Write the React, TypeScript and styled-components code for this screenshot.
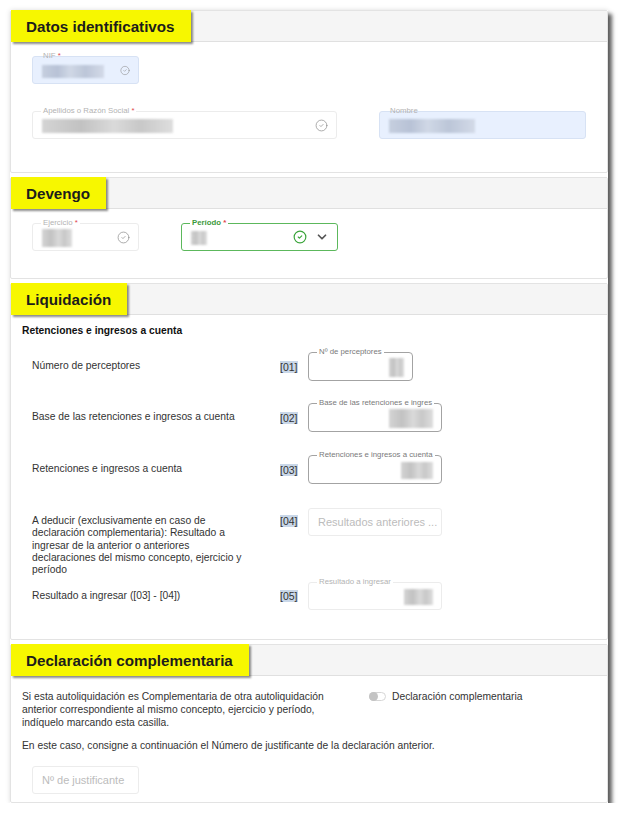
import React from 'react';
import styled, { createGlobalStyle, css } from 'styled-components';
import { CircleCheck, ChevronDown } from 'lucide-react';

const GlobalStyle = createGlobalStyle`
  html, body {
    margin: 0;
    padding: 0;
    background: #ffffff;
  }
  body {
    font-family: "Liberation Sans", Arial, sans-serif;
    color: #333;
  }
`;

const Frame = styled.div`
  margin: 10px 0 0 10px;
  width: 598px;
  background: #fff;
  box-shadow: 0 0 5px rgba(0, 0, 0, 0.12), 4px 4px 4px rgba(0, 0, 0, 0.62);
`;

const Card = styled.section<{ $last?: boolean }>`
  border: 1px solid #e3e3e3;
  border-radius: 2px;
  margin-bottom: ${p => (p.$last ? '0' : '4px')};
`;

const CardHeader = styled.div`
  height: 30px;
  background: #f5f5f5;
  border-bottom: 1px solid #e0e0e0;
  display: flex;
`;

const Tag = styled.h2`
  margin: 0;
  height: 32px;
  margin-top: -1px;
  padding: 0 16px 0 15px;
  display: flex;
  align-items: center;
  background: #f7f700;
  color: #1c1c1c;
  font-size: 15.2px;
  font-weight: 700;
  box-shadow: 2px 2px 2px rgba(0, 0, 0, 0.45);
  position: relative;
  z-index: 1;
`;

const Body = styled.div<{ $pad: string }>`
  padding: ${p => p.$pad};
`;

const FieldRow = styled.div<{ $gap?: number; $mt?: number; $indent?: number }>`
  display: flex;
  gap: ${p => p.$gap ?? 42}px;
  margin-top: ${p => p.$mt ?? 0}px;
  padding-left: ${p => p.$indent ?? 0}px;
`;

type Tone = 'light' | 'dark' | 'green' | 'filled';

const Box = styled.div<{ $w: number; $tone: Tone }>`
  position: relative;
  width: ${p => p.$w}px;
  height: 28px;
  box-sizing: border-box;
  border-radius: 3px;
  display: flex;
  align-items: center;
  gap: 8px;
  padding: 0 8px 0 9px;
  ${p =>
    p.$tone === 'light' &&
    css`
      border: 1px solid #ececec;
      background: #fff;
    `}
  ${p =>
    p.$tone === 'filled' &&
    css`
      border: 1px solid #d7e2f4;
      background: #e8f0fe;
    `}
  ${p =>
    p.$tone === 'dark' &&
    css`
      border: 1px solid #a3a3a3;
      border-radius: 4px;
      background: #fff;
      height: 29px;
    `}
  ${p =>
    p.$tone === 'green' &&
    css`
      border: 1px solid #5cb85c;
      background: #fff;
    `}
`;

const FloatLabel = styled.span<{ $tone: Tone }>`
  position: absolute;
  top: -6px;
  left: 8px;
  padding: 0 2px;
  font-size: 7.8px;
  line-height: 10px;
  white-space: nowrap;
  background: ${p => (p.$tone === 'filled' ? 'transparent' : '#fff')};
  color: ${p =>
    p.$tone === 'green' ? '#3c9a3c' : p.$tone === 'dark' ? '#7a7a7a' : '#b3b3b3'};
  font-weight: ${p => (p.$tone === 'green' ? 600 : 400)};
`;

const Req = styled.span`
  color: #e0474c;
`;

const Smudge = styled.span<{ $w: number; $h: number; $blue?: boolean }>`
  display: block;
  flex-shrink: 0;
  width: ${p => p.$w}px;
  height: ${p => p.$h}px;
  margin-top: 2px;
  background: ${p =>
    p.$blue
      ? 'linear-gradient(90deg, #c6cfdf 0%, #b8c2d6 25%, #d0d8e6 45%, #bcc6d8 70%, #d3dae8 100%)'
      : 'linear-gradient(90deg, #d4d4d4 0%, #c2c2c2 30%, #dadada 55%, #c8c8c8 75%, #dedede 100%)'};
  filter: blur(0.8px);
`;

const Spacer = styled.span`
  flex: 1;
`;

const Placeholder = styled.span`
  flex-shrink: 0;
  font-size: 11px;
  color: #bcbcbc;
  white-space: nowrap;
`;

type FieldProps = {
  w: number;
  tone?: Tone;
  label?: string;
  required?: boolean;
  smudge?: [number, number];
  right?: boolean;
  check?: 'gray' | 'green';
  select?: boolean;
  placeholder?: string;
};

const Field = ({ w, tone = 'light', label, required, smudge, right, check, select, placeholder }: FieldProps) => {
  const alignRight = right && !placeholder;
  return (
    <Box $w={w} $tone={tone}>
      {label && (
        <FloatLabel $tone={tone}>
          {label}
          {required && <Req> *</Req>}
        </FloatLabel>
      )}
      {alignRight && <Spacer />}
      {smudge && <Smudge $w={smudge[0]} $h={smudge[1]} $blue={tone === 'filled'} />}
      {placeholder && <Placeholder>{placeholder}</Placeholder>}
      {!alignRight && <Spacer />}
      {check === 'gray' && <CircleCheck size={13} strokeWidth={1.3} color="#8a8a8a" />}
      {check === 'green' && <CircleCheck size={14} strokeWidth={2} color="#3aa43a" />}
      {select && <ChevronDown size={14} strokeWidth={3} color="#555" />}
    </Box>
  );
};

const SubTitle = styled.h3`
  margin: 0 0 14px;
  font-size: 10.3px;
  line-height: 14px;
  font-weight: 700;
  color: #111;
`;

const LineRow = styled.div<{ $mt: number; $top?: boolean }>`
  display: grid;
  grid-template-columns: 248px 28px auto;
  align-items: ${p => (p.$top ? 'start' : 'center')};
  margin-top: ${p => p.$mt}px;
  padding-left: 10px;
`;

const LineText = styled.div<{ $top?: boolean }>`
  font-size: 10.3px;
  line-height: 12.3px;
  color: #333;
  padding-top: ${p => (p.$top ? '7px' : '0')};
  padding-right: 26px;
`;

const Code = styled.span<{ $top?: boolean }>`
  justify-self: start;
  font-size: 10.5px;
  line-height: 12px;
  color: #333;
  background: #c9d7e8;
  margin-top: ${p => (p.$top ? '7px' : '0')};
`;

const Para = styled.p<{ $mt?: number; $max?: number }>`
  margin: ${p => p.$mt ?? 0}px 0 0;
  max-width: ${p => (p.$max ? `${p.$max}px` : 'none')};
  font-size: 10.3px;
  line-height: 13px;
  color: #333;
`;

const ComplRow = styled.div`
  display: flex;
  align-items: flex-start;
`;

const ComplText = styled.div`
  width: 347px;
  flex-shrink: 0;
`;

const ToggleWrap = styled.label`
  display: flex;
  align-items: center;
  gap: 6px;
  font-size: 10.3px;
  line-height: 13px;
  color: #333;
`;

const Track = styled.span`
  position: relative;
  width: 17px;
  height: 9px;
  border-radius: 5px;
  background: #fff;
  border: 1px solid #d6d6d6;
  box-sizing: border-box;
`;

const Thumb = styled.span`
  position: absolute;
  left: -1px;
  top: -1px;
  width: 9px;
  height: 9px;
  border-radius: 50%;
  background: #c4c4c4;
`;

const lines = [
  { code: '01', text: 'Número de perceptores', mt: 0, field: { w: 105, label: 'Nº de perceptores', smudge: [15, 19] as [number, number], tone: 'dark' as Tone } },
  { code: '02', text: 'Base de las retenciones e ingresos a cuenta', mt: 22, field: { w: 134, label: 'Base de las retenciones e ingres', smudge: [44, 19] as [number, number], tone: 'dark' as Tone } },
  { code: '03', text: 'Retenciones e ingresos a cuenta', mt: 23, field: { w: 134, label: 'Retenciones e ingresos a cuenta', smudge: [32, 17] as [number, number], tone: 'dark' as Tone } },
  {
    code: '04',
    text: 'A deducir (exclusivamente en caso de declaración complementaria): Resultado a ingresar de la anterior o anteriores declaraciones del mismo concepto, ejercicio y período',
    mt: 24,
    top: true,
    field: { w: 134, placeholder: 'Resultados anteriores ...', tone: 'light' as Tone },
  },
  { code: '05', text: 'Resultado a ingresar ([03] - [04])', mt: 6, field: { w: 134, label: 'Resultado a ingresar', smudge: [29, 16] as [number, number], tone: 'light' as Tone } },
];

export default function App() {
  return (
    <>
      <GlobalStyle />
      <Frame>
        <Card>
          <CardHeader>
            <Tag>Datos identificativos</Tag>
          </CardHeader>
          <Body $pad="14px 0 33px 21px">
            <FieldRow>
              <Field w={107} tone="filled" label="NIF" required smudge={[62, 13]} check="gray" />
            </FieldRow>
            <FieldRow $mt={27}>
              <Field w={305} label="Apellidos o Razón Social" required smudge={[131, 14]} check="gray" />
              <Field w={207} tone="filled" label="Nombre" smudge={[86, 14]} />
            </FieldRow>
          </Body>
        </Card>

        <Card>
          <CardHeader>
            <Tag>Devengo</Tag>
          </CardHeader>
          <Body $pad="14px 0 27px 21px">
            <FieldRow>
              <Field w={107} label="Ejercicio" required smudge={[30, 18]} check="gray" />
              <Field w={157} tone="green" label="Período" required smudge={[16, 14]} check="green" select />
            </FieldRow>
          </Body>
        </Card>

        <Card>
          <CardHeader>
            <Tag>Liquidación</Tag>
          </CardHeader>
          <Body $pad="9px 0 29px 11px">
            <SubTitle>Retenciones e ingresos a cuenta</SubTitle>
            {lines.map(l => (
              <LineRow key={l.code} $mt={l.mt} $top={l.top}>
                <LineText $top={l.top}>{l.text}</LineText>
                <Code $top={l.top}>[{l.code}]</Code>
                <Field
                  w={l.field.w}
                  tone={l.field.tone}
                  label={'label' in l.field ? l.field.label : undefined}
                  smudge={'smudge' in l.field ? l.field.smudge : undefined}
                  placeholder={'placeholder' in l.field ? l.field.placeholder : undefined}
                  right
                />
              </LineRow>
            ))}
          </Body>
        </Card>

        <Card $last>
          <CardHeader>
            <Tag>Declaración complementaria</Tag>
          </CardHeader>
          <Body $pad="14px 0 8px 11px">
            <ComplRow>
              <ComplText>
                <Para $max={308}>
                  Si esta autoliquidación es Complementaria de otra autoliquidación anterior correspondiente al
                  mismo concepto, ejercicio y período, indíquelo marcando esta casilla.
                </Para>
              </ComplText>
              <ToggleWrap>
                <Track>
                  <Thumb />
                </Track>
                Declaración complementaria
              </ToggleWrap>
            </ComplRow>
            <Para $mt={10}>
              En este caso, consigne a continuación el Número de justificante de la declaración anterior.
            </Para>
            <FieldRow $mt={14} $indent={10}>
              <Field w={107} placeholder="Nº de justificante" />
            </FieldRow>
          </Body>
        </Card>
      </Frame>
    </>
  );
}
